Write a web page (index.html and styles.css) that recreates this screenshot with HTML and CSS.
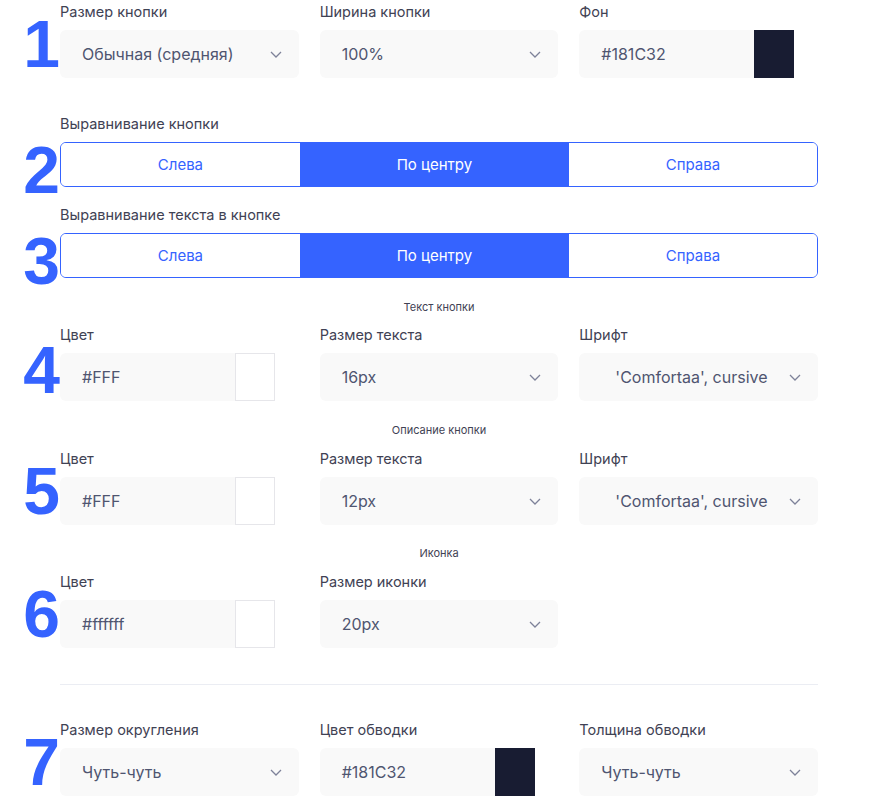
FILE: index.html
```html
<!DOCTYPE html>
<html lang="ru">
<head>
    <meta charset="UTF-8">
    <title>Настройки кнопки</title>
    <link rel="stylesheet" href="styles.css">
</head>
<body>
    <div class="panel">

        <!-- 1: size, width, background -->
        <div class="section row-first">
            <span class="num">1</span>
            <div class="grid">
                <div class="field">
                    <label>Размер кнопки</label>
                    <div class="select"><span>Обычная (средняя)</span><svg class="chev" width="12" height="7" viewBox="0 0 12 7"><polyline points="1,1 6,6 11,1"/></svg></div>
                </div>
                <div class="field">
                    <label>Ширина кнопки</label>
                    <div class="select"><span>100%</span><svg class="chev" width="12" height="7" viewBox="0 0 12 7"><polyline points="1,1 6,6 11,1"/></svg></div>
                </div>
                <div class="field">
                    <label>Фон</label>
                    <div class="color"><span class="color-text">#181C32</span><span class="swatch swatch-dark"></span></div>
                </div>
            </div>
        </div>

        <!-- 2: button alignment -->
        <div class="section row-align">
            <span class="num num-low">2</span>
            <label>Выравнивание кнопки</label>
            <div class="segments">
                <button class="seg">Слева</button>
                <button class="seg seg-active">По центру</button>
                <button class="seg">Справа</button>
            </div>
        </div>

        <!-- 3: text alignment -->
        <div class="section row-align2">
            <span class="num num-low">3</span>
            <label>Выравнивание текста в кнопке</label>
            <div class="segments">
                <button class="seg">Слева</button>
                <button class="seg seg-active">По центру</button>
                <button class="seg">Справа</button>
            </div>
        </div>

        <div class="subhead">Текст кнопки</div>

        <!-- 4: button text -->
        <div class="section row-text">
            <span class="num num-mid">4</span>
            <div class="grid">
                <div class="field">
                    <label>Цвет</label>
                    <div class="color"><span class="color-text">#FFF</span><span class="swatch swatch-white"></span></div>
                </div>
                <div class="field">
                    <label>Размер текста</label>
                    <div class="select"><span>16px</span><svg class="chev" width="12" height="7" viewBox="0 0 12 7"><polyline points="1,1 6,6 11,1"/></svg></div>
                </div>
                <div class="field">
                    <label>Шрифт</label>
                    <div class="select select-font"><span>'Comfortaa', cursive</span><svg class="chev" width="12" height="7" viewBox="0 0 12 7"><polyline points="1,1 6,6 11,1"/></svg></div>
                </div>
            </div>
        </div>

        <div class="subhead">Описание кнопки</div>

        <!-- 5: description -->
        <div class="section row-sub">
            <span class="num">5</span>
            <div class="grid">
                <div class="field">
                    <label>Цвет</label>
                    <div class="color"><span class="color-text">#FFF</span><span class="swatch swatch-white"></span></div>
                </div>
                <div class="field">
                    <label>Размер текста</label>
                    <div class="select"><span>12px</span><svg class="chev" width="12" height="7" viewBox="0 0 12 7"><polyline points="1,1 6,6 11,1"/></svg></div>
                </div>
                <div class="field">
                    <label>Шрифт</label>
                    <div class="select select-font"><span>'Comfortaa', cursive</span><svg class="chev" width="12" height="7" viewBox="0 0 12 7"><polyline points="1,1 6,6 11,1"/></svg></div>
                </div>
            </div>
        </div>

        <div class="subhead sub-icon">Иконка</div>

        <!-- 6: icon -->
        <div class="section row-sub">
            <span class="num">6</span>
            <div class="grid">
                <div class="field">
                    <label>Цвет</label>
                    <div class="color"><span class="color-text">#ffffff</span><span class="swatch swatch-white"></span></div>
                </div>
                <div class="field">
                    <label>Размер иконки</label>
                    <div class="select"><span>20px</span><svg class="chev" width="12" height="7" viewBox="0 0 12 7"><polyline points="1,1 6,6 11,1"/></svg></div>
                </div>
            </div>
        </div>

        <hr class="divider">

        <!-- 7: border -->
        <div class="section row-border">
            <span class="num">7</span>
            <div class="grid">
                <div class="field">
                    <label>Размер округления</label>
                    <div class="select"><span>Чуть-чуть</span><svg class="chev" width="12" height="7" viewBox="0 0 12 7"><polyline points="1,1 6,6 11,1"/></svg></div>
                </div>
                <div class="field">
                    <label>Цвет обводки</label>
                    <div class="color"><span class="color-text">#181C32</span><span class="swatch swatch-dark"></span></div>
                </div>
                <div class="field">
                    <label>Толщина обводки</label>
                    <div class="select"><span>Чуть-чуть</span><svg class="chev" width="12" height="7" viewBox="0 0 12 7"><polyline points="1,1 6,6 11,1"/></svg></div>
                </div>
            </div>
        </div>

    </div>
</body>
</html>
```

FILE: styles.css
```css
body {
    margin: 0;
    font-family: 'Inter', 'Noto Sans', sans-serif;
    background: #fff;
    color: #3f4254;
}

.panel {
    width: 758px;
    padding: 2px 0 0 60px;
}

.section {
    position: relative;
}

/* big blue step numbers laid over the form */
.num {
    position: absolute;
    left: -38px;
    top: 9px;
    width: 38px;
    text-align: right;
    font-family: 'Liberation Sans', Arial, sans-serif;
    font-weight: 700;
    font-size: 66px;
    line-height: 1;
    color: #3563ff;
    pointer-events: none;
}

.num-low {
    top: 23px;
}

.num-mid {
    top: 12px;
}

label {
    display: block;
    font-size: 14.5px;
    line-height: 20px;
    color: #3f4254;
    margin-bottom: 8px;
    white-space: nowrap;
}

.grid {
    display: grid;
    grid-template-columns: repeat(3, 1fr);
    column-gap: 21px;
}

.select {
    height: 48px;
    background: #f9f9f9;
    border-radius: 6px;
    display: flex;
    align-items: center;
    justify-content: space-between;
    padding: 0 17px 0 22px;
    font-size: 16px;
    color: #4f5570;
}

.select-font {
    padding-left: 36px;
}

.chev {
    fill: none;
    stroke: #7e8299;
    stroke-width: 1.3;
}

.color {
    display: flex;
    width: 215px;
    height: 48px;
}

.color-text {
    flex: 1;
    display: flex;
    align-items: center;
    padding-left: 22px;
    background: #f9f9f9;
    border-radius: 6px 0 0 6px;
    font-size: 16px;
    color: #4f5570;
}

.swatch {
    width: 40px;
    box-sizing: border-box;
}

.swatch-dark {
    background: #181c32;
}

.swatch-white {
    background: #fff;
    border: 1px solid #e6e6ea;
}

/* segmented alignment control */
.segments {
    display: flex;
    height: 45px;
    border: 1px solid #3563ff;
    border-radius: 6px;
    overflow: hidden;
    box-sizing: border-box;
}

.seg {
    flex: 1 1 auto;
    border: none;
    background: #fff;
    font-family: inherit;
    font-size: 15px;
    color: #3563ff;
    padding: 0;
    cursor: pointer;
}

.seg-active {
    background: #3563ff;
    color: #fff;
}

.row-align {
    margin-top: 36px;
}

.row-align2 {
    margin-top: 18px;
}

.subhead {
    text-align: center;
    font-size: 11px;
    line-height: 14px;
    color: #3f4254;
    margin-top: 22px;
}

.sub-icon {
    margin-top: 21px;
}

.row-text {
    margin-top: 11px;
}

.row-sub {
    margin-top: 12px;
}

.divider {
    border: none;
    border-top: 1px solid #ebedf3;
    margin: 36px 0 0;
}

.row-border {
    margin-top: 35px;
}
```
